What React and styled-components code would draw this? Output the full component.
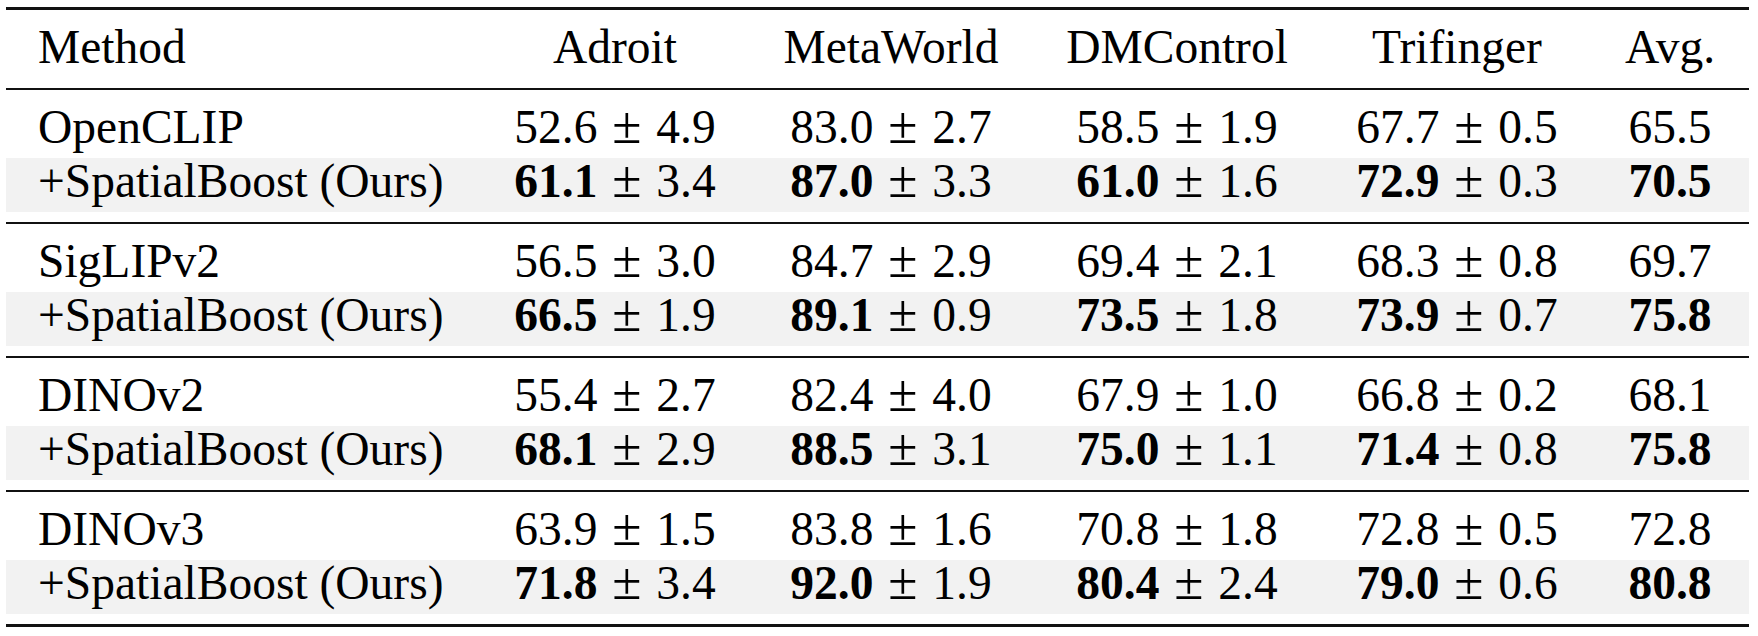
import React from 'react'
import styled, { createGlobalStyle } from 'styled-components'

const GlobalStyle = createGlobalStyle`
  body {
    margin: 0;
    background: #fff;
    font-family: "Liberation Serif", "Times New Roman", serif;
    color: #000;
  }
`

const Page = styled.div`
  padding: 7px 9px 0 6px;
`

const Table = styled.div`
  width: 1743px;
  border-top: 3px solid #111;
  border-bottom: 3px solid #111;
`

const Group = styled.div`
  padding: 14px 0 10px;
  border-bottom: ${(p) => (p.$last ? 'none' : '2px solid #111')};
`

const Row = styled.div`
  display: grid;
  grid-template-columns: 473px 272px 280px 292px 268px 158px;
  height: 54px;
  background: ${(p) => (p.$shaded ? '#f2f2f2' : 'transparent')};
`

const Cell = styled.div`
  font-size: 47.5px;
  line-height: 46px;
  white-space: pre;
  text-align: ${(p) => (p.$left ? 'left' : 'center')};
  padding-left: ${(p) => (p.$left ? '32px' : '0')};
`

const Best = styled.b`
  font-weight: 700;
`

const Pm = styled.span`
  font-size: 1.12em;
  line-height: 40px;
  margin: 0 3px;
`

const columns = ['Adroit', 'MetaWorld', 'DMControl', 'Trifinger']

const groups = [
  {
    name: 'OpenCLIP',
    base: [['52.6', '4.9'], ['83.0', '2.7'], ['58.5', '1.9'], ['67.7', '0.5']],
    baseAvg: '65.5',
    ours: [['61.1', '3.4'], ['87.0', '3.3'], ['61.0', '1.6'], ['72.9', '0.3']],
    oursAvg: '70.5',
  },
  {
    name: 'SigLIPv2',
    base: [['56.5', '3.0'], ['84.7', '2.9'], ['69.4', '2.1'], ['68.3', '0.8']],
    baseAvg: '69.7',
    ours: [['66.5', '1.9'], ['89.1', '0.9'], ['73.5', '1.8'], ['73.9', '0.7']],
    oursAvg: '75.8',
  },
  {
    name: 'DINOv2',
    base: [['55.4', '2.7'], ['82.4', '4.0'], ['67.9', '1.0'], ['66.8', '0.2']],
    baseAvg: '68.1',
    ours: [['68.1', '2.9'], ['88.5', '3.1'], ['75.0', '1.1'], ['71.4', '0.8']],
    oursAvg: '75.8',
  },
  {
    name: 'DINOv3',
    base: [['63.9', '1.5'], ['83.8', '1.6'], ['70.8', '1.8'], ['72.8', '0.5']],
    baseAvg: '72.8',
    ours: [['71.8', '3.4'], ['92.0', '1.9'], ['80.4', '2.4'], ['79.0', '0.6']],
    oursAvg: '80.8',
  },
]

const Score = ({ mean, std, bold }) => (
  <Cell>
    {bold ? <Best>{mean}</Best> : mean}
    {' '}
    <Pm>±</Pm>
    {' '}
    {std}
  </Cell>
)

export default function App() {
  return (
    <Page>
      <GlobalStyle />
      <Table>
        <Group>
          <Row>
            <Cell $left>Method</Cell>
            {columns.map((c) => (
              <Cell key={c}>{c}</Cell>
            ))}
            <Cell>Avg.</Cell>
          </Row>
        </Group>
        {groups.map((g, i) => (
          <Group key={g.name} $last={i === groups.length - 1}>
            <Row>
              <Cell $left>{g.name}</Cell>
              {g.base.map(([m, s], j) => (
                <Score key={j} mean={m} std={s} />
              ))}
              <Cell>{g.baseAvg}</Cell>
            </Row>
            <Row $shaded>
              <Cell $left>+SpatialBoost (Ours)</Cell>
              {g.ours.map(([m, s], j) => (
                <Score key={j} mean={m} std={s} bold />
              ))}
              <Cell>
                <Best>{g.oursAvg}</Best>
              </Cell>
            </Row>
          </Group>
        ))}
      </Table>
    </Page>
  )
}
